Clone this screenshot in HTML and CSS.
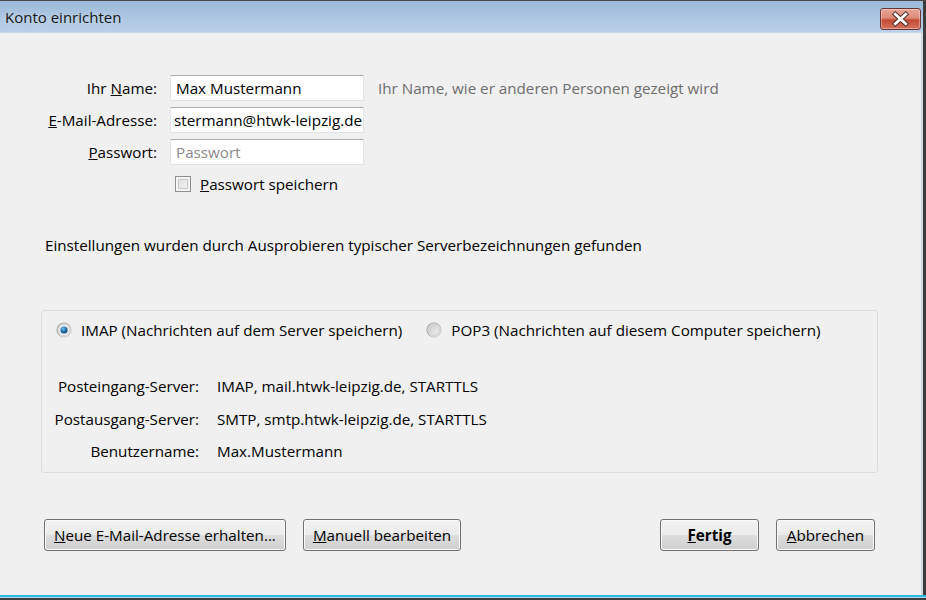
FILE: index.html
```html
<!DOCTYPE html>
<html lang="de">
<head>
<meta charset="utf-8">
<title>Konto einrichten</title>
<link rel="stylesheet" href="styles.css">
</head>
<body>
<div class="window">
  <div class="titlebar">
    <span class="title">Konto einrichten</span>
    <button class="close" aria-label="Schließen">
      <svg width="41" height="22" viewBox="0 0 41 22">
        <path d="M15 6 L26 16 M26 6 L15 16" stroke="#4a2a2a" stroke-width="5" stroke-linecap="square" fill="none"/>
        <path d="M15 6 L26 16 M26 6 L15 16" stroke="#ffffff" stroke-width="3" stroke-linecap="square" fill="none"/>
      </svg>
    </button>
  </div>
  <div class="content">
    <div class="form">
      <label class="lbl">Ihr <u>N</u>ame:</label>
      <div class="input">Max Mustermann</div>
      <span class="hint">Ihr Name, wie er anderen Personen gezeigt wird</span>

      <label class="lbl"><u>E</u>-Mail-Adresse:</label>
      <div class="input clip"><span class="clipwrap"><span>max.mustermann@htwk-leipzig.de</span></span></div>
      <span></span>

      <label class="lbl"><u>P</u>asswort:</label>
      <div class="input placeholder">Passwort</div>
      <span></span>

      <span></span>
      <div class="check"><span class="box"></span><span><u>P</u>asswort speichern</span></div>
      <span></span>
    </div>

    <p class="status">Einstellungen wurden durch Ausprobieren typischer Serverbezeichnungen gefunden</p>

    <div class="group">
      <div class="radios">
        <span class="radio">
          <svg width="16" height="16" viewBox="0 0 16 16">
            <defs>
              <linearGradient id="rg1" x1="0" y1="0" x2="1" y2="1"><stop offset="0" stop-color="#9a9a9a"/><stop offset="1" stop-color="#d8d8d8"/></linearGradient>
              <radialGradient id="dot" cx="0.4" cy="0.35" r="0.7"><stop offset="0" stop-color="#6fc4f0"/><stop offset="0.6" stop-color="#1a6aa8"/><stop offset="1" stop-color="#0d3e6e"/></radialGradient>
            </defs>
            <circle cx="8" cy="8" r="7" fill="#ececec" stroke="url(#rg1)" stroke-width="1.2"/>
            <circle cx="8" cy="8" r="5.3" fill="#f8f8f8" stroke="#c8c8c8" stroke-width="0.8"/>
            <circle cx="8" cy="8" r="3.6" fill="url(#dot)"/>
          </svg>
          IMAP (Nachrichten auf dem Server speichern)
        </span>
        <span class="radio">
          <svg width="16" height="16" viewBox="0 0 16 16">
            <defs>
              <linearGradient id="rg2" x1="0" y1="0" x2="1" y2="1"><stop offset="0" stop-color="#9a9a9a"/><stop offset="1" stop-color="#d8d8d8"/></linearGradient>
              <linearGradient id="in2" x1="0" y1="0" x2="1" y2="1"><stop offset="0" stop-color="#c8c8c8"/><stop offset="1" stop-color="#f4f4f4"/></linearGradient>
            </defs>
            <circle cx="8" cy="8" r="7" fill="#ececec" stroke="url(#rg2)" stroke-width="1.2"/>
            <circle cx="8" cy="8" r="5.3" fill="url(#in2)" stroke="#c0c0c0" stroke-width="0.8"/>
          </svg>
          POP3 (Nachrichten auf diesem Computer speichern)
        </span>
      </div>
      <div class="details">
        <span class="dl">Posteingang-Server:</span><span>IMAP, mail.htwk-leipzig.de, STARTTLS</span>
        <span class="dl">Postausgang-Server:</span><span>SMTP, smtp.htwk-leipzig.de, STARTTLS</span>
        <span class="dl">Benutzername:</span><span>Max.Mustermann</span>
      </div>
    </div>

    <div class="buttons">
      <button class="btn"><u>N</u>eue E-Mail-Adresse erhalten...</button>
      <button class="btn"><u>M</u>anuell bearbeiten</button>
      <span class="spacer"></span>
      <button class="btn wide default"><u>F</u>ertig</button>
      <button class="btn wide"><u>A</u>bbrechen</button>
    </div>
  </div>
  <div class="bottomedge"></div>
</div>
</body>
</html>
```
FILE: styles.css
```css
* { box-sizing: border-box; }
html, body { margin: 0; padding: 0; background: #3c3c3c; }
body {
  width: 926px;
  height: 600px;
  overflow: hidden;
  font-family: "Open Sans", "Noto Sans", "Liberation Sans", sans-serif;
  font-size: 15.2px;
  color: #000;
}
.window {
  width: 926px;
  height: 600px;
  display: flex;
  flex-direction: column;
  background: #f0f0f0;
  border-top: 1px solid #4a4a4a;
  border-right: 3px solid #3c3c3c;
  box-shadow: inset -2px 0 0 #7fd0ea;
}
.titlebar {
  height: 32px;
  flex: none;
  display: flex;
  align-items: center;
  justify-content: space-between;
  padding: 0 2px 0 5px;
  background: linear-gradient(#9dbad9, #b9d0e9);
  border-bottom: 1px solid #c6d7ea;
}
.title {
  font-size: 15px;
  color: #151515;
  text-shadow: 0 0 6px rgba(255,255,255,0.6);
}
.close {
  width: 41px;
  height: 22px;
  padding: 0;
  margin-top: 4px;
  border: 1px solid #6b3434;
  border-radius: 3px;
  background: linear-gradient(#e8a696 0%, #dc8a78 45%, #c44a32 55%, #d2735c 100%);
  box-shadow: inset 0 0 0 1px rgba(255,255,255,0.35);
  display: flex;
  align-items: center;
  justify-content: center;
}
.close svg { display: block; }
.content {
  flex: 1;
  display: flex;
  flex-direction: column;
  padding: 42px 0 0 0;
  border-right: 2px solid #cfd9df;
}
.form {
  display: grid;
  grid-template-columns: 157px 194px auto;
  grid-auto-rows: 26px;
  column-gap: 13px;
  row-gap: 6px;
  align-items: center;
}
.lbl { text-align: right; white-space: nowrap; }
.input {
  height: 26px;
  background: #fff;
  border: 1px solid #e2e3ea;
  border-top-color: #abadb3;
  padding: 0 5px;
  display: flex;
  align-items: center;
  white-space: nowrap;
  overflow: hidden;
}
.input.clip { padding: 0 1px 0 2px; }
.clipwrap {
  flex: 1;
  min-width: 0;
  overflow: hidden;
  display: flex;
  justify-content: flex-end;
}
.clipwrap span { flex: none; }
.input.placeholder { color: #8a8a8a; }
.hint { color: #6d6d6d; padding-left: 1px; }
.check {
  display: flex;
  align-items: center;
  gap: 9px;
  padding-left: 5px;
}
.box {
  width: 16px;
  height: 16px;
  border: 1px solid #8e8f8f;
  background: linear-gradient(135deg, #d9dadb, #f6f6f6);
  box-shadow: inset 0 0 0 2px #f4f4f4, inset 0 0 0 3px #c7c8c9;
}
.status {
  margin: 36px 0 0 45px;
  line-height: 24px;
}
.group {
  margin: 53px 0 0 41px;
  width: 837px;
  height: 163px;
  border: 1px solid #dcdcdc;
  border-radius: 3px;
  padding: 9px 0 0 14px;
}
.radios {
  display: flex;
  gap: 24px;
  line-height: 20px;
}
.radio {
  display: flex;
  align-items: center;
  gap: 9px;
}
.radio svg { display: block; }
.details {
  margin: 36px 0 0 -4px;
  display: grid;
  grid-template-columns: 147px auto;
  column-gap: 18px;
  grid-auto-rows: 32.5px;
  white-space: nowrap;
}
.dl { text-align: right; }
.buttons {
  display: flex;
  align-items: center;
  margin: 46px 0 0 44px;
  width: 831px;
  gap: 17px;
}
.spacer { flex: 1; }
.btn {
  font: inherit;
  color: #000;
  height: 32px;
  padding: 0 9px;
  border: 1px solid #707070;
  border-radius: 3px;
  background: linear-gradient(#f2f2f2 0%, #ebebeb 50%, #dddddd 51%, #cfcfcf 100%);
  box-shadow: inset 0 0 0 1px #fbfbfb;
}
.btn.wide { min-width: 99px; }
.btn.default { font-weight: bold; }
.bottomedge {
  height: 5px;
  flex: none;
  border-top: 2px solid #2fb8dc;
  background: linear-gradient(#9fdcef 0 1px, #3c3c3c 1px);
  margin-right: -3px;
}
```
